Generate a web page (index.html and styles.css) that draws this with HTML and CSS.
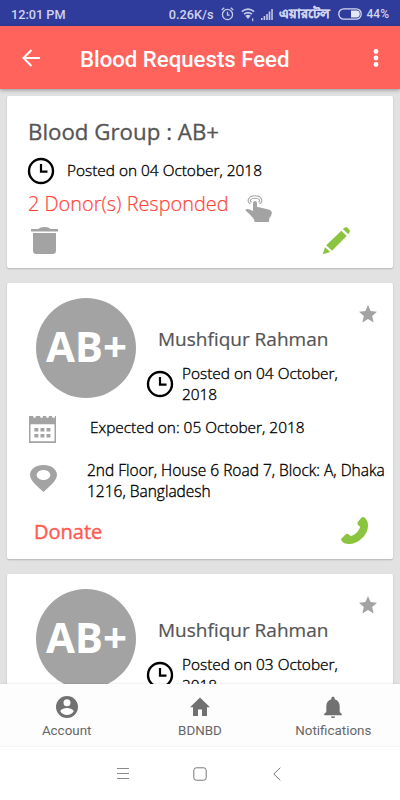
FILE: index.html
```html
<!DOCTYPE html>
<html lang="en">
<head>
    <meta charset="UTF-8">
    <meta name="viewport" content="width=device-width, initial-scale=1.0">
    <title>Blood Requests Feed</title>
    <link rel="stylesheet" href="styles.css">
</head>
<body>
    <svg class="symbols" aria-hidden="true">
        <symbol id="clock" viewBox="0 0 28 28">
            <circle cx="14" cy="14" r="12" fill="none" stroke="#000" stroke-width="2.4"/>
            <path d="M14 7v7.600h6.500" fill="none" stroke="#000" stroke-width="2.200"/>
        </symbol>
        <symbol id="star" viewBox="0 0 18 18">
            <path fill="#a3a3a3" d="M9 0l2.600 6.100 6.400.6-4.800 4.400 1.400 6.400L9 14.100l-5.600 3.400 1.400-6.400L0 6.700l6.400-.6z"/>
        </symbol>
    </svg>
    <div class="screen">
        <div class="status-bar">
            <span class="time">12:01 PM</span>
            <span class="speed">0.26K/s</span>
            <svg class="alarm" width="13" height="14" viewBox="0 0 12 13" fill="none" stroke="#c6cbe8">
                <circle cx="6" cy="7" r="4.700" stroke-width="1.200"/>
                <path d="M6 4.500V7.500h2M.6 2.800L3 .8M11.400 2.800L9 .8" stroke-width="1.200"/>
            </svg>
            <svg class="wifi" width="14" height="15" viewBox="0 0 14 15" fill="none" stroke="#c6cbe8" stroke-width="1.600">
                <path d="M.8 4.600q6.200-5 12.400 0M3 7.200q4-3.200 8 0"/>
                <path d="M4.300 8.800q2.700-2 5.400 0L7 12z" fill="#c6cbe8" stroke="none"/>
                <path d="M11.700 11.300v3" stroke-width="1.200"/>
            </svg>
            <svg class="signal" width="12" height="11" viewBox="0 0 12 11" fill="#c6cbe8">
                <path d="M0 9h1.600v2H0zM2.600 7h1.600v4H2.600zM5.200 5h1.600v6H5.200zM7.700 2.500h1.600V11H7.700zM10.300 0h1.500v11h-1.500z"/>
            </svg>
            <span class="carrier">এয়ারটেল</span>
            <svg class="battery" width="24" height="12" viewBox="0 0 24 12">
                <rect x=".8" y=".8" width="22.400" height="10.400" rx="5" fill="none" stroke="#d6daf0" stroke-width="1.300"/>
                <path d="M13 2.600h5.400a3.400 3.400 0 0 1 0 6.800H13z" fill="#e4e7f6"/>
            </svg>
            <span class="percent">44%</span>
        </div>
        <header class="app-bar">
            <svg class="back" width="18" height="18" viewBox="0 0 18 18" fill="none" stroke="#fff" stroke-width="2">
                <path d="M18 9H1.500M9.500 1L1.500 9l8 8"/>
            </svg>
            <h1>Blood Requests Feed</h1>
            <svg class="more" width="6" height="18" viewBox="0 0 6 18" fill="#fff">
                <circle cx="3" cy="2.500" r="2.400"/><circle cx="3" cy="9" r="2.400"/><circle cx="3" cy="15.500" r="2.400"/>
            </svg>
        </header>
        <main class="feed">
            <section class="card own-request">
                <h2>Blood Group : AB+</h2>
                <div class="posted">
                    <svg class="clock"><use href="#clock"/></svg>
                    <span class="text">Posted on 04 October, 2018</span>
                </div>
                <div class="responses">
                    <span>2 Donor(s) Responded</span>
                    <svg width="27" height="27" viewBox="0 0 27 27" fill="#a3a3a3">
                        <path d="M8 8.500c0-3.200 4-3.200 4 0v3.300l10.500 2.400c3 .7 4.500 2 4.300 3.800-.2 2-.8 3.200-2.300 4.800l-.7 4.200H9.500c0-3-2-4.500-4.300-7.300L.3 15.300c1.500-2.100 3-1.800 7.700.7z"/>
                        <g fill="none" stroke="#a3a3a3" stroke-width="1.100">
                            <path d="M5.500 8.800C.8 6.500 3.500.8 10 .8s9.200 5.700 4.500 8"/>
                            <path d="M6.500 7.400C4 5.300 6 3.200 10 3.200s6 2.100 3.500 4.200"/>
                        </g>
                    </svg>
                </div>
                <div class="actions">
                    <svg width="27" height="27" viewBox="0 0 27 27" fill="#a3a3a3">
                        <path d="M0 2h7.500Q9 0 13.500 0t6 2H27v2.500H0z"/>
                        <path d="M2 6h23v17.500q0 3.500-3.500 3.500h-16Q2 27 2 23.500z"/>
                    </svg>
                    <svg width="27" height="27" viewBox="0 0 27 27" fill="#8bc53f">
                        <path d="M19.800 2L22 .5q1-.8 2.200 0l2.200 2.200q1 1 .2 2.200L25.400 7.300zM18.400 3.700l5.300 5.200L9 23.700l-5.800-5.400zM2.100 20.200l5.100 4.900L.6 27q-.7 0-.6-.8z"/>
                    </svg>
                </div>
            </section>
            <section class="card request">
                <div class="summary">
                    <div class="group"><span>AB+</span></div>
                    <div class="person">
                        <svg class="star"><use href="#star"/></svg>
                        <h3>Mushfiqur Rahman</h3>
                        <div class="posted">
                            <svg class="clock"><use href="#clock"/></svg>
                            <span class="text">Posted on 04 October,<br>2018</span>
                        </div>
                    </div>
                </div>
                <div class="expected">
                    <svg width="27" height="27" viewBox="0 0 27 27" fill="#a3a3a3">
                        <path fill-rule="evenodd" d="M0 0h4q0 2 1.500 2T7 0h4q0 2 1.500 2T14 0h3q0 2 1.500 2T20 0h3q0 2 1.500 2T26 0h1v27H0zM1.500 8.200v17h24v-17z"/>
                        <path d="M5.400 12h3.900v3.600H5.400zM11.500 12h3.900v3.600h-3.900zM17.500 12h3.900v3.600h-3.900zM5.400 18h3.900v3.600H5.400zM11.500 18h3.900v3.600h-3.900zM17.500 18h3.900v3.600h-3.900z"/>
                    </svg>
                    <span class="text">Expected on: 05 October, 2018</span>
                </div>
                <div class="location">
                    <svg width="27" height="27" viewBox="0 0 27 27" fill="#a3a3a3">
                        <path fill-rule="evenodd" d="M13.500 27C8 22 0 15.500 0 10 0 4 6 0 13.500 0S27 4 27 10c0 5.500-8 12-13.500 17zM13.500 5C9.700 5 6.700 7.200 6.700 10s3 5 6.800 5 6.800-2.200 6.800-5-3-5-6.800-5z"/>
                    </svg>
                    <span class="text">2nd Floor, House 6 Road 7, Block: A, Dhaka<br>1216, Bangladesh</span>
                </div>
                <div class="donate">
                    <a>Donate</a>
                    <svg width="27" height="27" viewBox="0 0 27 27" fill="#8bc53f">
                        <path d="M20.300.8q1.800-1.500 3.500 0 3.200 2.800 3.200 7.600c0 9.500-9.500 18.600-19.500 18.600q-4.500 0-7-3.200-1-1.600.5-2.800l3.500-3.400q1.600-1.400 3.300-.1L10 19.200c4-1.300 7.700-4.800 9.200-9.100l-2.100-2.200q-1.500-1.700.1-3.500z"/>
                    </svg>
                </div>
            </section>
            <section class="card request">
                <div class="summary">
                    <div class="group"><span>AB+</span></div>
                    <div class="person">
                        <svg class="star"><use href="#star"/></svg>
                        <h3>Mushfiqur Rahman</h3>
                        <div class="posted">
                            <svg class="clock"><use href="#clock"/></svg>
                            <span class="text">Posted on 03 October,<br>2018</span>
                        </div>
                    </div>
                </div>
            </section>
        </main>
        <nav class="tabs">
            <a>
                <svg width="24" height="24" viewBox="0 0 24 24" fill="#717171">
                    <path fill-rule="evenodd" d="M12 1a11 11 0 1 0 0 22 11 11 0 0 0 0-22zm0 3.300a3.500 3.500 0 1 1 0 7 3.500 3.500 0 0 1 0-7zM12 20c-2.800 0-5.200-1.400-6.600-3.500 0-2.200 4.400-3.400 6.600-3.400s6.600 1.200 6.600 3.400C17.200 18.600 14.800 20 12 20z"/>
                </svg>
                <span>Account</span>
            </a>
            <a>
                <svg width="24" height="24" viewBox="0 0 24 24" fill="#717171">
                    <path d="M10 21v-6.500h4V21h5v-8.700h3L12 2.500 2 12.300h3V21z"/>
                </svg>
                <span>BDNBD</span>
            </a>
            <a>
                <svg width="24" height="24" viewBox="0 0 24 24" fill="#717171">
                    <path d="M12 23c1.200 0 2.100-.7 2.100-1.600H9.900c0 .9.900 1.600 2.100 1.600zM18.700 17v-6c0-3.300-1.900-5.900-5-6.700v-.8c0-2.200-3.400-2.200-3.400 0v.8c-3.100.8-5 3.400-5 6.700v6L3.200 19v1.200h17.600V19z"/>
                </svg>
                <span>Notifications</span>
            </a>
        </nav>
        <div class="system-nav">
            <svg width="14" height="14" viewBox="0 0 14 14" fill="none" stroke="#8a8a8a"><path d="M1 1.500h12M1 6.500h12M1 11.500h12"/></svg>
            <svg width="14" height="14" viewBox="0 0 14 14" fill="none" stroke="#777"><rect x=".8" y=".8" width="12.400" height="12.400" rx="2.500"/></svg>
            <svg width="14" height="14" viewBox="0 0 14 14" fill="none" stroke="#777"><path d="M10.300.7L3.800 7l6.500 6.300"/></svg>
        </div>
    </div>
</body>
</html>
```
FILE: styles.css
```css
body {
    margin: 0;
    font-family: "Open Sans", "Noto Sans", sans-serif;
    color: #000;
}

svg {
    display: block;
    flex: none;
}

h1, h2, h3 {
    margin: 0;
}

.symbols {
    display: none;
}

.screen {
    display: flex;
    flex-direction: column;
    width: 400px;
    height: 800px;
    overflow: hidden;
    background: #e2e2e2;
}

.status-bar {
    display: flex;
    align-items: center;
    flex: none;
    height: 26px;
    padding: 2px 11px 0 11px;
    box-sizing: border-box;
    background: #303c9c;
    color: #d0d4ed;
    font-family: Roboto, sans-serif;
    font-size: 12.7px;
    font-weight: 500;
    white-space: nowrap;
}

.speed {
    margin-left: auto;
}

.alarm {
    margin-left: 7px;
}

.wifi {
    margin-left: 7px;
}

.signal {
    margin-left: 6px;
}

.carrier {
    width: 53px;
    margin-left: 6px;
    font-size: 13.4px;
    font-weight: 700;
    line-height: 20px;
    -webkit-text-stroke: 0.3px #d0d4ed;
}

.battery {
    margin-left: 6px;
}

.percent {
    margin-left: 5px;
    font-size: 12px;
}

.app-bar {
    display: flex;
    align-items: center;
    flex: none;
    height: 63px;
    padding: 0 21px 0 22px;
    box-sizing: border-box;
    background: #ff635c;
    box-shadow: 0 1px 4px rgba(0, 0, 0, 0.35);
    z-index: 1;
}

.app-bar h1 {
    flex: 1;
    margin-left: 40px;
    padding-top: 2px;
    color: #fff;
    font-family: Roboto, sans-serif;
    font-size: 22.2px;
    font-weight: 500;
}

.feed {
    display: flex;
    flex-direction: column;
    flex: 1;
    gap: 15px;
    min-height: 0;
    padding: 7px 7px 0 7px;
    overflow: hidden;
}

.card {
    flex: none;
    box-sizing: border-box;
    border-radius: 2px;
    background: #fff;
    box-shadow: 0 1px 2px rgba(0, 0, 0, 0.2);
}

.text {
    font-size: 15.4px;
    font-weight: 300;
    line-height: 21px;
    white-space: nowrap;
    -webkit-text-stroke: 0.35px #000;
}

.clock {
    width: 28px;
    height: 28px;
}

.own-request {
    height: 172px;
    padding: 20px 43px 0 21px;
}

.own-request h2 {
    height: 32px;
    color: #555;
    font-size: 22.3px;
    font-weight: 400;
    line-height: 31px;
    -webkit-text-stroke: 0.3px #555;
}

.own-request .posted {
    display: flex;
    align-items: center;
    gap: 11px;
    height: 45px;
}

.own-request .clock {
    margin-left: -1px;
    margin-right: 1px;
}

.responses {
    display: flex;
    align-items: center;
    gap: 16px;
    height: 20px;
    color: #ff443c;
    font-size: 19.9px;
    font-weight: 300;
    -webkit-text-stroke: 0.2px #ff443c;
}

.responses svg {
    margin-top: 10px;
}

.actions {
    display: flex;
    justify-content: space-between;
    padding: 14px 0 0 3px;
}

.request {
    height: 276px;
}

.summary {
    display: flex;
    height: 133px;
}

.group {
    display: flex;
    align-items: center;
    justify-content: center;
    flex: none;
    width: 100px;
    height: 100px;
    margin: 15px 10px 0 29px;
    border-radius: 50%;
    background: #a3a3a3;
    color: #fff;
    font-size: 42px;
    font-weight: 700;
}

.group span {
    margin-top: -6px;
    padding-left: 1px;
}

.person {
    flex: 1;
    padding-top: 22px;
}

.star {
    width: 18px;
    height: 18px;
    margin: 0 16px 0 auto;
}

.person h3 {
    padding-left: 12px;
    color: #555;
    font-size: 19px;
    font-weight: 400;
    line-height: 32px;
    -webkit-text-stroke: 0.2px #555;
}

.person .posted {
    display: flex;
    align-items: center;
    gap: 8px;
    height: 58px;
}

.expected {
    display: flex;
    gap: 34px;
    height: 49px;
    padding-left: 22px;
}

.expected .text {
    margin-top: 1px;
}

.location {
    display: flex;
    gap: 30px;
    height: 51px;
    padding-left: 23px;
}

.location .text {
    margin-top: -5px;
    font-size: 15.5px;
}

.donate {
    display: flex;
    align-items: center;
    justify-content: space-between;
    padding: 0 25px 0 27px;
    color: #ff5a52;
    font-size: 20px;
    -webkit-text-stroke: 0.4px #ff5a52;
}

.donate a {
    margin-top: 2px;
}

.tabs {
    display: grid;
    grid-template-columns: repeat(3, 1fr);
    flex: none;
    height: 62px;
    background: #fdfdfd;
    box-shadow: 0 0 2px rgba(0, 0, 0, 0.15);
    z-index: 1;
}

.tabs a {
    display: flex;
    flex-direction: column;
    align-items: center;
    padding-top: 11px;
    color: #666;
    font-family: Roboto, sans-serif;
    font-size: 13.4px;
    line-height: 24px;
}

.system-nav {
    display: flex;
    align-items: center;
    justify-content: center;
    gap: 63px;
    flex: none;
    height: 54px;
    background: #fff;
    border-top: 1px solid #f3f3f3;
    box-sizing: border-box;
    z-index: 2;
}
```
